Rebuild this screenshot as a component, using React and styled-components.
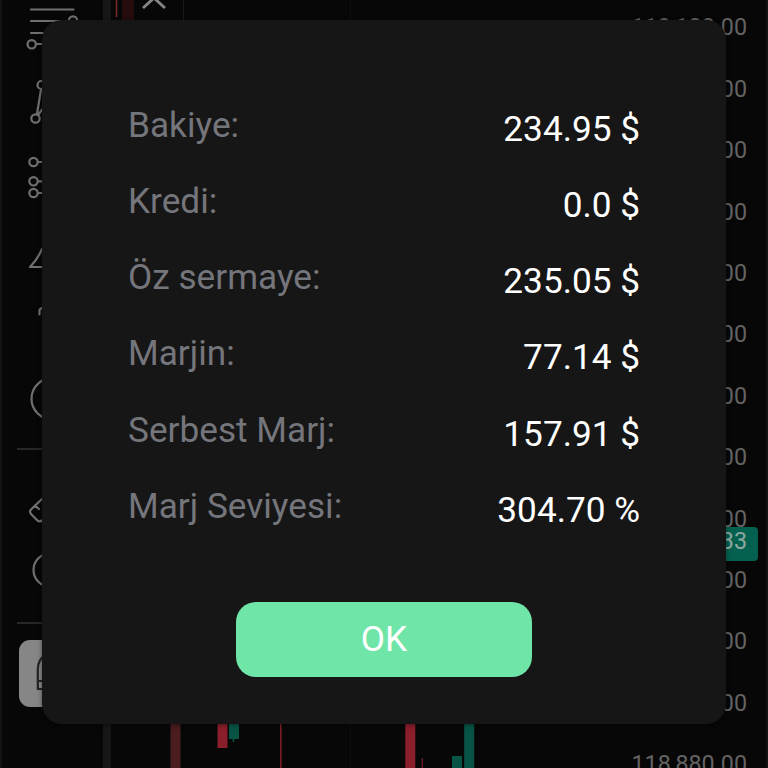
import React from "react";
import styled, { createGlobalStyle } from "styled-components";

const GlobalStyle = createGlobalStyle`
  * { box-sizing: border-box; }
  html, body { margin: 0; background: #070707; overflow: hidden; }
  body { font-family: Roboto, "Liberation Sans", sans-serif; }
`;

const Screen = styled.div`
  position: relative;
  display: flex;
  width: 768px;
  height: 768px;
  overflow: hidden;
  background: #070707;
`;

const Toolbar = styled.aside`
  display: flex;
  flex-direction: column;
  flex: none;
  width: 103px;
  border-left: 2px solid #131313;
`;

const ToolIcon = styled.svg`
  display: block;
  flex: none;
  width: 101px;
  height: ${(p) => p.$height}px;
  fill: none;
  stroke: ${(p) => p.$color || "#707070"};
  stroke-width: 2.2;
  stroke-linecap: round;
  stroke-linejoin: round;
`;

const ToolDivider = styled.div`
  flex: none;
  width: 70px;
  height: 2px;
  margin-left: 15px;
  background: #272727;
`;

const MagnetButton = styled.div`
  flex: none;
  width: 68px;
  height: 67px;
  margin: 16px 0 0 17px;
  border-radius: 11px;
  background: #868686;
`;

const Splitter = styled.div`
  flex: none;
  width: 8px;
  background: #171717;
`;

const ChartPane = styled.svg`
  display: block;
  flex: 1;
  min-width: 0;
  height: 768px;
`;

const PriceAxis = styled.div`
  display: flex;
  flex-direction: column;
  flex: none;
  width: 148px;
  padding-top: 10.4px;
  padding-right: 19px;
  border-right: 2px solid #131313;
`;

const PriceLabel = styled.div`
  flex: none;
  height: 61.4px;
  line-height: 35px;
  font-size: 23.3px;
  color: #636363;
  text-align: right;
  white-space: nowrap;
`;

const CurrentPrice = styled.div`
  position: absolute;
  right: 10px;
  top: 527px;
  width: 136px;
  height: 34px;
  padding-right: 11px;
  border-radius: 4px;
  background: #04614f;
  color: #8fa8a2;
  font-size: 23.3px;
  line-height: 28px;
  text-align: right;
`;

const Dialog = styled.section`
  position: absolute;
  left: 42px;
  top: 20px;
  display: flex;
  flex-direction: column;
  align-items: center;
  width: 684px;
  height: 704px;
  padding: 67px 86px 0;
  border-radius: 20px;
  background: #161616;
  box-shadow: 0 1px 5px rgba(0, 0, 0, 0.45);
`;

const Rows = styled.dl`
  width: 100%;
  margin: 0;
`;

const Row = styled.div`
  display: flex;
  justify-content: space-between;
  height: 76.15px;
  font-size: 35.2px;
  line-height: 76px;
`;

const Label = styled.dt`
  color: #75757c;
`;

const Value = styled.dd`
  margin: 0;
  padding-top: 4px;
  color: #fff;
`;

const OkButton = styled.button`
  width: 296px;
  height: 75px;
  margin-top: 58.5px;
  padding: 0 0 2px;
  border: 0;
  border-radius: 20px;
  background: #70e5a8;
  color: #fff;
  font: 400 35.2px Roboto, "Liberation Sans", sans-serif;
`;

const balances = [
  ["Bakiye:", "234.95 $"],
  ["Kredi:", "0.0 $"],
  ["Öz sermaye:", "235.05 $"],
  ["Marjin:", "77.14 $"],
  ["Serbest Marj:", "157.91 $"],
  ["Marj Seviyesi:", "304.70 %"],
];

const prices = Array.from({ length: 13 }, (_, i) => `${119120 - i * 20}`).map(
  (p) => `${p.slice(0, 3)},${p.slice(3)}.00`
);

function DrawingTools() {
  return (
    <Toolbar>
      <ToolIcon $height={60} viewBox="2 0 101 60">
        <path d="M31 9.5H73.5M31 21H68M31 33H74M37 44H74" />
        <circle cx="73" cy="20.5" r="4.2" />
        <circle cx="31.7" cy="44.3" r="4.2" />
      </ToolIcon>
      <ToolIcon $height={80} viewBox="2 60 101 80">
        <circle cx="41.5" cy="85" r="4" />
        <circle cx="35.5" cy="118.5" r="4.2" />
        <path d="M41 89.5L37 114M38 115L48 102" />
      </ToolIcon>
      <ToolIcon $height={80} viewBox="2 140 101 80">
        <circle cx="33.5" cy="162" r="4.2" />
        <circle cx="33.5" cy="181.3" r="4.2" />
        <circle cx="33.5" cy="193" r="4.2" />
        <path d="M38 162H60M38 181.3H60M38 193H60" />
      </ToolIcon>
      <ToolIcon $height={140} viewBox="2 220 101 140">
        <path d="M42 249C39 256 35 262 30 267H60" />
        <path d="M39.5 314.5V311Q39.5 308 43 308H60" />
      </ToolIcon>
      <ToolIcon $height={88} viewBox="2 360 101 88">
        <circle cx="52" cy="398.7" r="20.5" />
      </ToolIcon>
      <ToolDivider />
      <ToolIcon $height={90} viewBox="2 450 101 90">
        <path d="M44 497L30.5 510Q29.5 512 31 514L38 521Q40 522 43 520M35 505.5L39 509" />
      </ToolIcon>
      <ToolIcon $height={82} viewBox="2 540 101 82">
        <circle cx="50" cy="570" r="16.5" />
      </ToolIcon>
      <ToolDivider />
      <MagnetButton>
        <ToolIcon $height={67} $color="#242424" viewBox="19 640 101 67">
          <path d="M37.8 689V669Q38 659 46 655M38 681H48M38 689H48" />
        </ToolIcon>
      </MagnetButton>
    </Toolbar>
  );
}

function Candles() {
  return (
    <ChartPane viewBox="111 0 509 768" preserveAspectRatio="xMinYMin slice">
      <path d="M183.5 0V40" stroke="#1a1a1a" />
      <path d="M350.5 0V768" stroke="#0f0f0f" />
      <path d="M116.5 0V17" stroke="#7b2b2c" strokeWidth="1.5" />
      <rect x="122" y="0" width="12" height="24" fill="#260c0d" />
      <path d="M143 8L154 -2L165 8" fill="none" stroke="#858585" strokeWidth="2.9" />
      <rect x="170.5" y="700" width="10" height="68" fill="#4b1d1e" />
      <rect x="217.5" y="700" width="10" height="48" fill="#8a1f2b" />
      <path d="M233.5 739V742" stroke="#075445" strokeWidth="1.5" />
      <rect x="229" y="700" width="10" height="39" fill="#075445" />
      <path d="M280.8 700V768" stroke="#8a1f2b" strokeWidth="1.4" />
      <rect x="405.3" y="700" width="10" height="68" fill="#8a1f2b" />
      <path d="M422.3 758V768" stroke="#711b25" strokeWidth="1.3" />
      <rect x="452" y="756" width="10" height="12" fill="#075445" />
      <rect x="464.2" y="700" width="10" height="68" fill="#075445" />
    </ChartPane>
  );
}

export default function App() {
  return (
    <>
      <GlobalStyle />
      <Screen>
        <DrawingTools />
        <Splitter />
        <Candles />
        <PriceAxis>
          {prices.map((price) => (
            <PriceLabel key={price}>{price}</PriceLabel>
          ))}
        </PriceAxis>
        <CurrentPrice>118,952.33</CurrentPrice>
        <Dialog role="dialog" aria-modal="true">
          <Rows>
            {balances.map(([label, value]) => (
              <Row key={label}>
                <Label>{label}</Label>
                <Value>{value}</Value>
              </Row>
            ))}
          </Rows>
          <OkButton>OK</OkButton>
        </Dialog>
      </Screen>
    </>
  );
}
